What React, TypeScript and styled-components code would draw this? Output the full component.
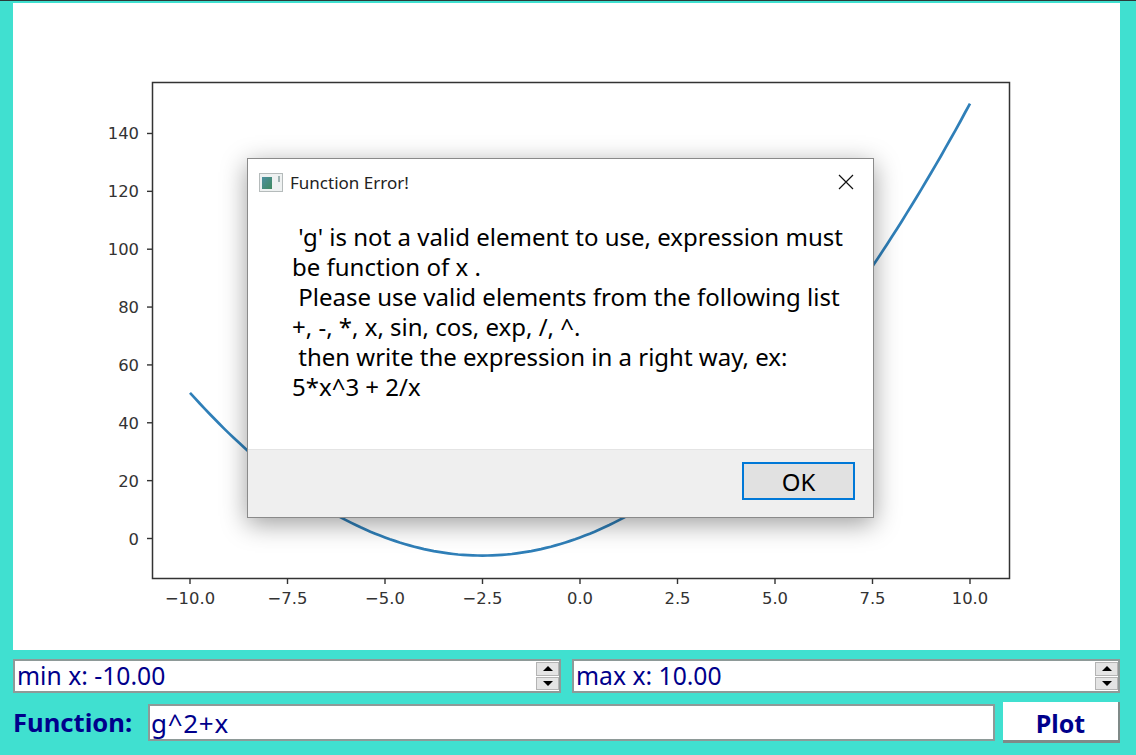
import React from "react";
import styled, { createGlobalStyle } from "styled-components";

const GlobalStyle = createGlobalStyle`
  html, body {
    margin: 0;
    padding: 0;
    background: #40e0d0;
  }
  #root {
    width: 1136px;
    height: 755px;
  }
`;

const Page = styled.div`
  width: 1136px;
  height: 755px;
  box-sizing: border-box;
  padding: 2px 16px 13px 13px;
  display: flex;
  flex-direction: column;
  background: #40e0d0;
  border-top: 1px solid #2b3a3a;
  font-family: "Noto Sans", "Open Sans", sans-serif;
  color: #00008b;
  overflow: hidden;
`;

const PlotArea = styled.div`
  position: relative;
  width: 1107px;
  height: 647px;
  flex: none;
  background: #fff;
`;

const Chart = styled.svg`
  display: block;
  margin-top: 1px;
  font-family: "DejaVu Sans", sans-serif;
  font-size: 16.4px;
`;

const Controls = styled.div`
  display: flex;
  flex-direction: column;
  gap: 10px;
  margin-top: 9px;
`;

const Row = styled.div`
  display: flex;
  align-items: stretch;
  gap: 11px;
`;

const SpinBox = styled.div`
  flex: 1;
  height: 34px;
  box-sizing: border-box;
  display: flex;
  align-items: center;
  justify-content: space-between;
  padding: 0 0 0 2px;
  background: #fff;
  border: 2px solid #8e9a98;
  font-size: 24.7px;
  line-height: 30px;
`;

const SpinButtons = styled.div`
  width: 23px;
  height: 28px;
  display: flex;
  flex-direction: column;
  gap: 1px;
  background: #fff;
`;

const SpinButton = styled.div<{ $down?: boolean }>`
  flex: 1;
  display: flex;
  align-items: center;
  justify-content: center;
  background: #e4e4e4;
  border: 1px solid #b4b4b4;
  &::before {
    content: "";
    border-left: 5px solid transparent;
    border-right: 5px solid transparent;
    ${({ $down }) =>
      $down ? "border-top: 5px solid #000;" : "border-bottom: 5px solid #000;"}
  }
`;

const FunctionRow = styled.div`
  display: flex;
  align-items: center;
  height: 39px;
`;

const FunctionLabel = styled.label`
  width: 135px;
  flex: none;
  font-size: 25.6px;
  font-weight: 700;
`;

const FunctionInput = styled.div`
  width: 847px;
  height: 37px;
  box-sizing: border-box;
  display: flex;
  align-items: center;
  padding-left: 1px;
  background: #fff;
  border: 2px solid #8e9a98;
  font-size: 26px;
  letter-spacing: 0.7px;
`;

const PlotButton = styled.button`
  width: 117px;
  height: 41px;
  margin-left: 8px;
  padding: 3px 0 0;
  background: #fff;
  border: none;
  border-right: 2px solid #7f8a88;
  border-bottom: 3px solid #7f8a88;
  color: #00008b;
  font-family: inherit;
  font-size: 25px;
  font-weight: 700;
`;

const Dialog = styled.div`
  position: absolute;
  left: 234px;
  top: 155px;
  width: 627px;
  height: 360px;
  box-sizing: border-box;
  display: flex;
  flex-direction: column;
  background: #fff;
  border: 1px solid #8a8a8a;
  box-shadow: 0 6px 24px rgba(0, 0, 0, 0.38);
  color: #000;
`;

const TitleBar = styled.div`
  height: 46px;
  flex: none;
  display: flex;
  align-items: center;
  padding: 0 19px 0 11px;
  font-size: 17px;
  color: #222;
`;

const TitleText = styled.span`
  flex: 1;
  margin-left: 7px;
`;

const Message = styled.div`
  flex: 1;
  padding: 17px 0 0 44px;
  font-size: 24px;
  line-height: 30px;
  white-space: pre;
`;

const DialogFooter = styled.div`
  height: 68px;
  flex: none;
  box-sizing: border-box;
  display: flex;
  align-items: flex-start;
  justify-content: flex-end;
  padding: 12px 18px 0 0;
  background: #efefef;
  border-top: 1px solid #e4e4e4;
`;

const OkButton = styled.button`
  width: 113px;
  height: 38px;
  padding: 0;
  background: #e1e1e1;
  border: 2px solid #0078d7;
  color: #000;
  font-family: inherit;
  font-size: 24px;
`;

const xTicks = [-10, -7.5, -5, -2.5, 0, 2.5, 5, 7.5, 10];
const yTicks = [0, 20, 40, 60, 80, 100, 120, 140];

const px = (x: number) => 567 + x * 39;
const py = (y: number) => 534.5 - y * 2.893;

const curve = Array.from({ length: 161 }, (_, i) => {
  const x = -10 + i * 0.125;
  return `${px(x).toFixed(1)},${(py(x * x + 5 * x) - 1).toFixed(1)}`;
}).join(" ");

const label = (v: number, digits: number) =>
  (v < 0 ? "\u2212" : "") + Math.abs(v).toFixed(digits);

function PlotChart() {
  return (
    <Chart width="1107" height="646" viewBox="0 0 1107 646">
      <polyline points={curve} fill="none" stroke="#2f7fb8" strokeWidth="2.7" />
      <rect x="139.5" y="78.5" width="857" height="496" fill="none" stroke="#333" strokeWidth="1.5" />
      {xTicks.map((t) => (
        <g key={t}>
          <line x1={px(t)} x2={px(t)} y1="575" y2="580" stroke="#333" strokeWidth="1.4" />
          <text x={px(t)} y="600" textAnchor="middle" fill="#333">
            {label(t, 1)}
          </text>
        </g>
      ))}
      {yTicks.map((t) => (
        <g key={t}>
          <line x1="134" x2="139" y1={py(t)} y2={py(t)} stroke="#333" strokeWidth="1.4" />
          <text x="126" y={py(t) + 6} textAnchor="end" fill="#333">
            {t}
          </text>
        </g>
      ))}
    </Chart>
  );
}

function WindowIcon() {
  return (
    <svg width="24" height="19" viewBox="0 0 24 19">
      <defs>
        <linearGradient id="tile" x1="0" y1="0" x2="1" y2="1">
          <stop offset="0" stopColor="#4d8fa0" />
          <stop offset="1" stopColor="#3f8a5f" />
        </linearGradient>
      </defs>
      <rect x="0.5" y="0.5" width="23" height="18" fill="#eef1f1" stroke="#b5bbbb" />
      <rect x="3" y="4" width="10" height="12" fill="url(#tile)" />
      <rect x="19" y="3" width="2" height="6" fill="#9fb2b2" />
    </svg>
  );
}

function CloseIcon() {
  return (
    <svg width="16" height="16" viewBox="0 0 16 16">
      <path d="M1 1 L15 15 M15 1 L1 15" stroke="#111" strokeWidth="1.2" fill="none" />
    </svg>
  );
}

export default function App() {
  return (
    <Page>
      <GlobalStyle />
      <PlotArea>
        <PlotChart />
        <Dialog>
          <TitleBar>
            <WindowIcon />
            <TitleText>Function Error!</TitleText>
            <CloseIcon />
          </TitleBar>
          <Message>
            {" 'g' is not a valid element to use, expression must\nbe function of x .\n Please use valid elements from the following list\n+, -, *, x, sin, cos, exp, /, ^.\n then write the expression in a right way, ex:\n5*x^3 + 2/x"}
          </Message>
          <DialogFooter>
            <OkButton>OK</OkButton>
          </DialogFooter>
        </Dialog>
      </PlotArea>
      <Controls>
        <Row>
          <SpinBox>
            min x: -10.00
            <SpinButtons>
              <SpinButton />
              <SpinButton $down />
            </SpinButtons>
          </SpinBox>
          <SpinBox>
            max x: 10.00
            <SpinButtons>
              <SpinButton />
              <SpinButton $down />
            </SpinButtons>
          </SpinBox>
        </Row>
        <FunctionRow>
          <FunctionLabel>Function:</FunctionLabel>
          <FunctionInput>g^2+x</FunctionInput>
          <PlotButton>Plot</PlotButton>
        </FunctionRow>
      </Controls>
    </Page>
  );
}
